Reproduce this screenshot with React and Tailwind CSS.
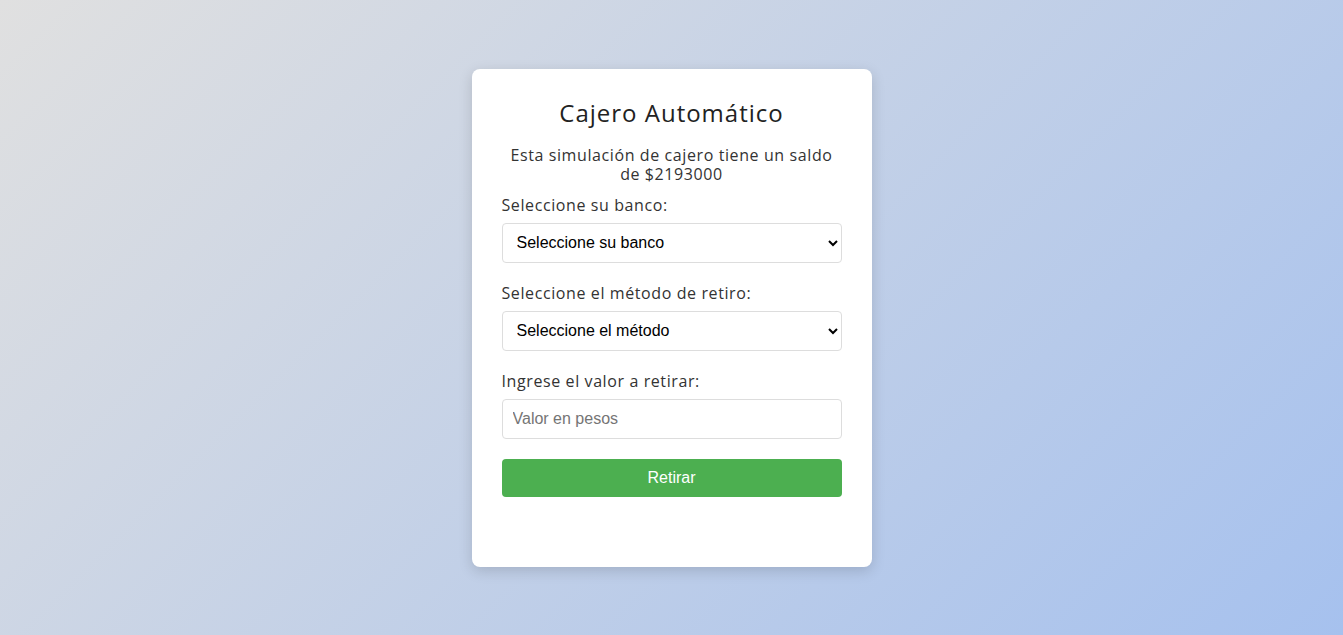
import { useState } from 'react';

export default function App() {
  const [banco, setBanco] = useState('');
  const [metodo, setMetodo] = useState('');
  const [valor, setValor] = useState('');

  return (
    <div className="min-h-screen w-full flex items-center justify-center bg-[linear-gradient(135deg,#e0e0e0_0%,#a6c1ee_100%)] font-['Open_Sans',sans-serif]">
      <div className="w-[400px] bg-white rounded-lg shadow-[0_4px_14px_rgba(0,0,0,0.15)] px-[30px] pt-[30px] pb-[70px]">
        <h1 className="text-center text-[24px] leading-[28px] font-medium text-[#222] mb-[19px] tracking-[1px]">
          Cajero Automático
        </h1>
        <p className="text-center text-[16px] leading-[19px] text-[#333] mb-[11px] tracking-[0.6px]">
          Esta simulación de cajero tiene un saldo de $2193000
        </p>

        <label className="block text-[16px] leading-[20px] text-[#333] mb-[8px] tracking-[0.6px]">Seleccione su banco:</label>
        <select
          value={banco}
          onChange={(e) => setBanco(e.target.value)}
          className="block w-full h-[40px] px-[10px] border border-[#ddd] rounded-[4px] bg-white text-black text-[16px] font-['Liberation_Sans',Arial,sans-serif] mb-[20px]"
        >
          <option value="">Seleccione su banco</option>
          <option value="bancolombia">Bancolombia</option>
          <option value="nequi">Nequi</option>
        </select>

        <label className="block text-[16px] leading-[20px] text-[#333] mb-[8px] tracking-[0.6px]">Seleccione el método de retiro:</label>
        <select
          value={metodo}
          onChange={(e) => setMetodo(e.target.value)}
          className="block w-full h-[40px] px-[10px] border border-[#ddd] rounded-[4px] bg-white text-black text-[16px] font-['Liberation_Sans',Arial,sans-serif] mb-[20px]"
        >
          <option value="">Seleccione el método</option>
          <option value="tarjeta">Tarjeta</option>
          <option value="codigo">Código</option>
        </select>

        <label className="block text-[16px] leading-[20px] text-[#333] mb-[8px] tracking-[0.6px]">Ingrese el valor a retirar:</label>
        <input
          type="number"
          value={valor}
          onChange={(e) => setValor(e.target.value)}
          placeholder="Valor en pesos"
          className="block w-full h-[40px] px-[10px] border border-[#ddd] rounded-[4px] text-[16px] text-black placeholder:text-[#757575] font-['Liberation_Sans',Arial,sans-serif] mb-[20px] outline-none"
        />

        <button className="block w-full h-[38px] bg-[#4caf50] text-white text-[16px] rounded-[4px] font-['Liberation_Sans',Arial,sans-serif]">
          Retirar
        </button>
      </div>
    </div>
  );
}
